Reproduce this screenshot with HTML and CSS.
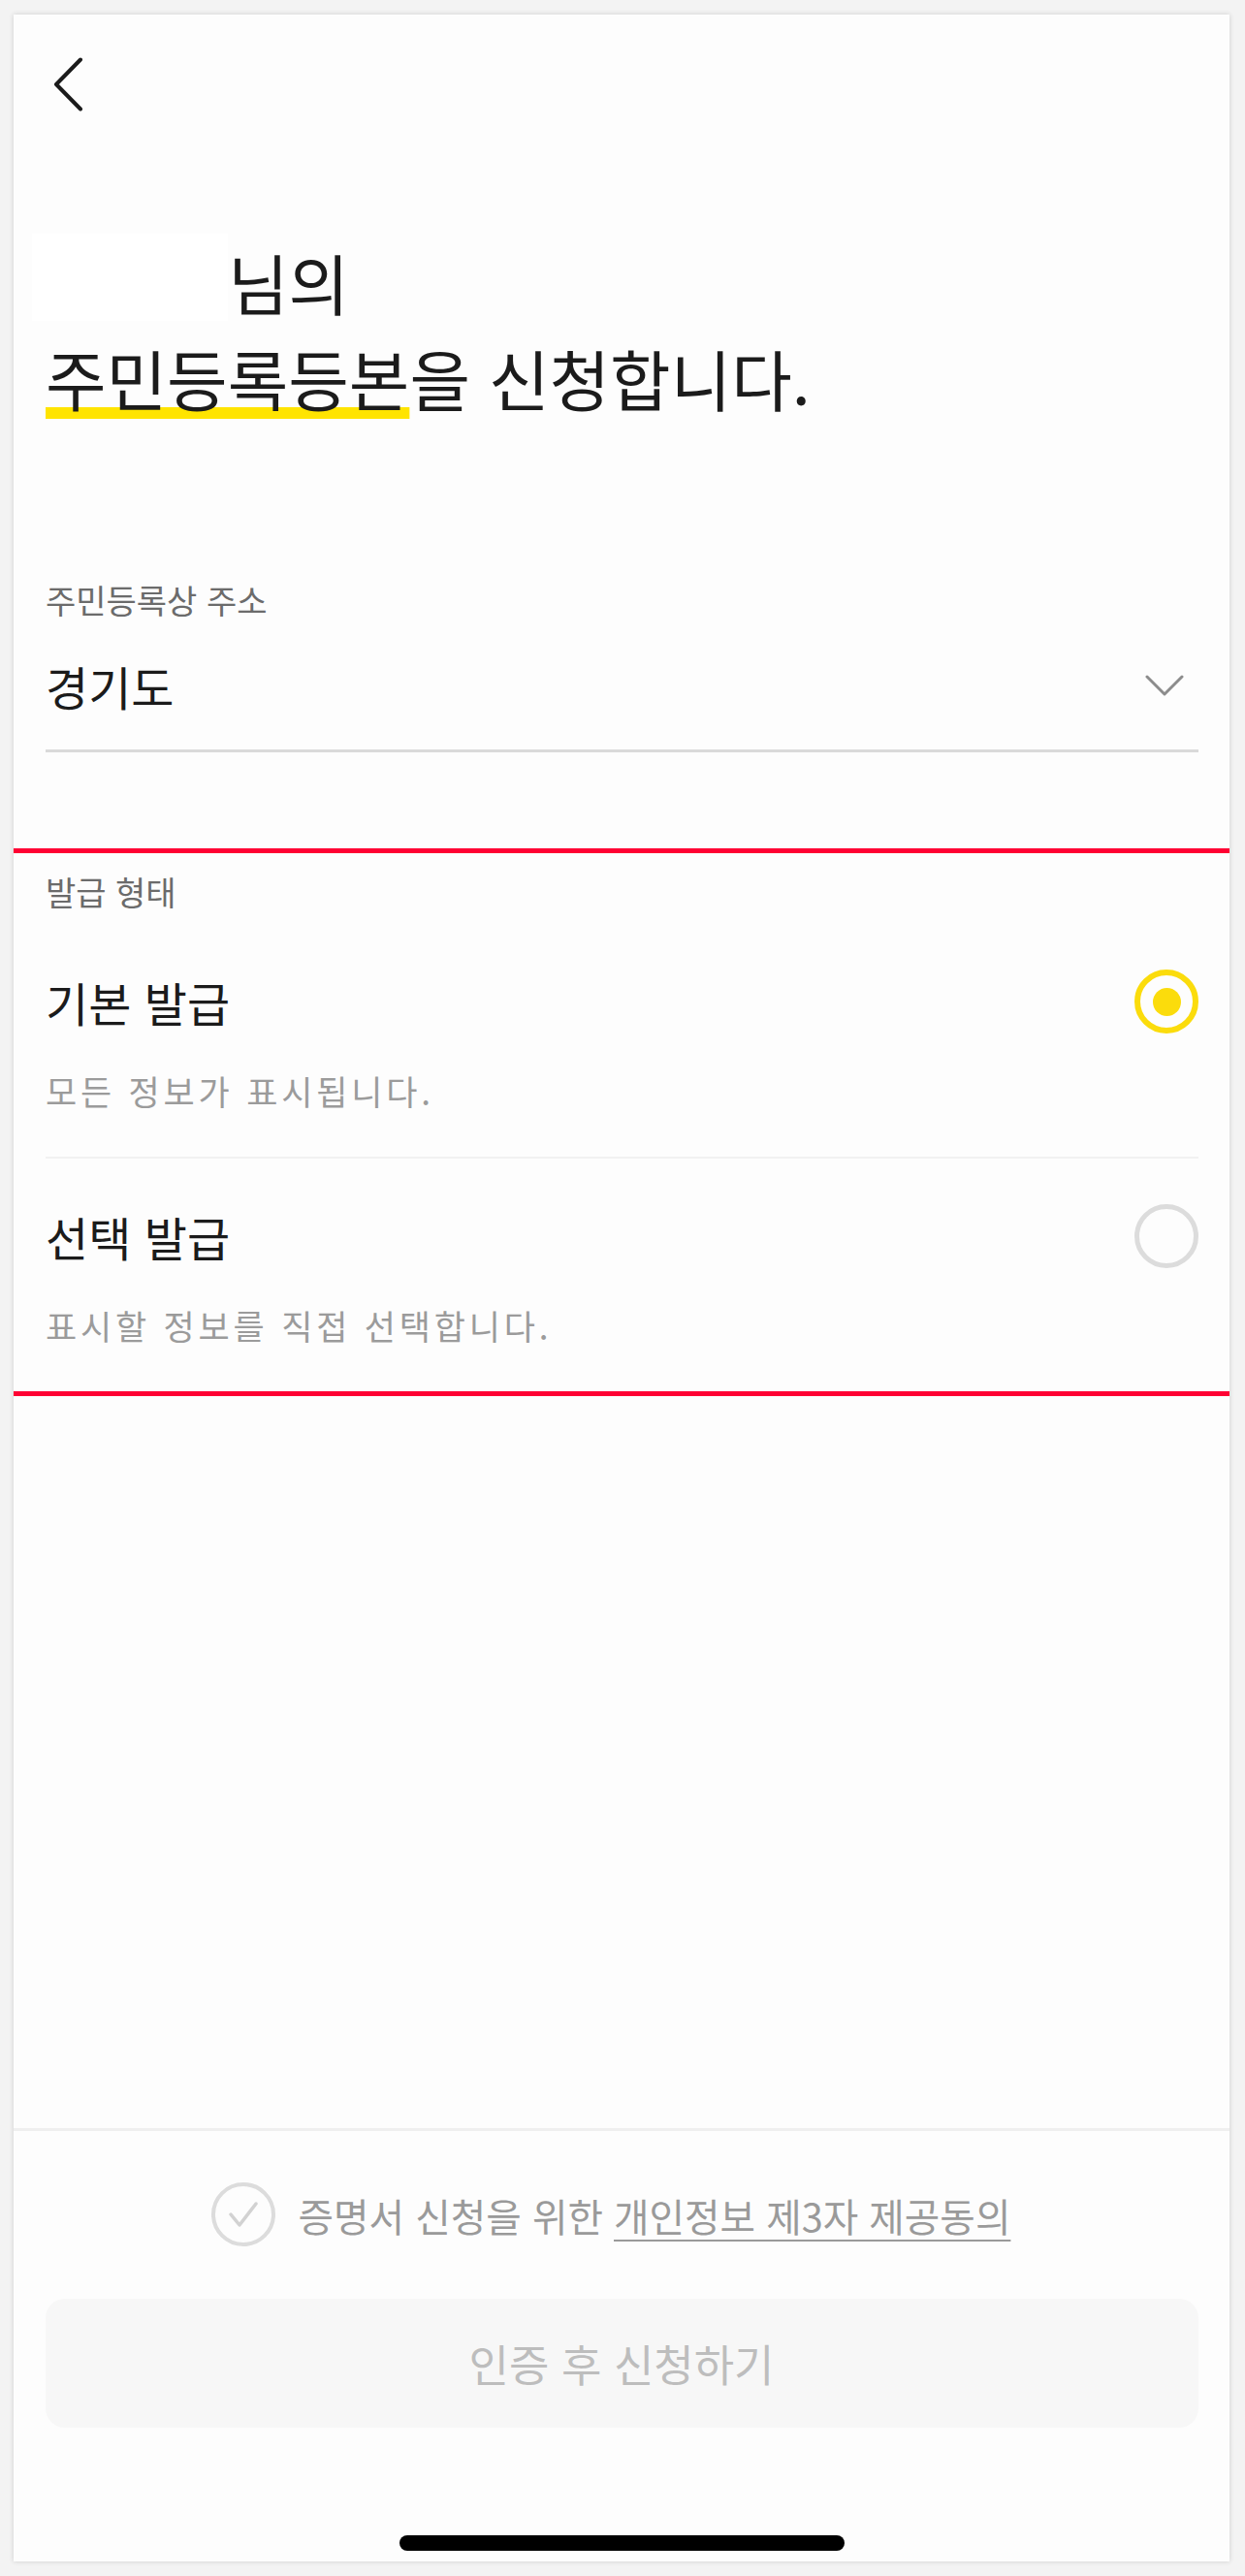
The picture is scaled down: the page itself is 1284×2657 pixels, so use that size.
FILE: index.html
```html
<!DOCTYPE html>
<html lang="ko">
<head>
<meta charset="utf-8">
<title>주민등록등본 신청</title>
<link rel="stylesheet" href="styles.css">
</head>
<body>
<div class="phone">
  <header class="topbar">
    <svg class="back" width="32" height="56" viewBox="0 0 32 56" aria-label="뒤로">
      <path d="M28 2.5 L3 28 L28 53.5" fill="none" stroke="#1b1b1b" stroke-width="4" stroke-linecap="round" stroke-linejoin="round"/>
    </svg>
  </header>

  <h1 class="title">
    <span class="line"><span class="name-mask"></span>님의</span>
    <span class="line"><span class="hl">주민등록등본</span>을 신청합니다.</span>
  </h1>

  <section class="field">
    <div class="label">주민등록상 주소</div>
    <div class="select">
      <span class="value">경기도</span>
      <svg class="chev" width="40" height="24" viewBox="0 0 40 24">
        <path d="M2 3 L20 21 L38 3" fill="none" stroke="#8c8c8c" stroke-width="3" stroke-linecap="round" stroke-linejoin="round"/>
      </svg>
    </div>
  </section>

  <section class="issue">
    <div class="label label-issue">발급 형태</div>
    <div class="option option-first">
      <div class="option-row">
        <span class="option-title">기본 발급</span>
        <span class="radio radio-on"></span>
      </div>
      <div class="option-desc">모든 정보가 표시됩니다.</div>
    </div>
    <div class="option">
      <div class="option-row">
        <span class="option-title">선택 발급</span>
        <span class="radio"></span>
      </div>
      <div class="option-desc">표시할 정보를 직접 선택합니다.</div>
    </div>
  </section>

  <div class="spacer"></div>

  <footer class="footer">
    <div class="consent">
      <svg class="check" width="66" height="66" viewBox="0 0 66 66">
        <circle cx="33" cy="33" r="31" fill="none" stroke="#dcdcdc" stroke-width="4"/>
        <path d="M20 33 L29 44 L46 22" fill="none" stroke="#d2d2d2" stroke-width="3.5" stroke-linecap="round" stroke-linejoin="round"/>
      </svg>
      <span class="consent-text">증명서 신청을 위한 <span class="consent-link">개인정보 제3자 제공동의</span></span>
    </div>
    <button class="submit" type="button">인증 후 신청하기</button>
    <div class="home-indicator"></div>
  </footer>
</div>
</body>
</html>
```

FILE: styles.css
```css
html, body {
  margin: 0;
  padding: 0;
}

body {
  background: #f3f3f3;
  font-family: "Noto Sans CJK KR", "Noto Sans", sans-serif;
  width: 1284px;
  height: 2657px;
  overflow: hidden;
}

.phone {
  width: 1254px;
  height: 2627px;
  margin: 15px 0 0 14px;
  background: #fdfdfd;
  box-shadow: 0 0 5px rgba(0, 0, 0, 0.16);
  display: flex;
  flex-direction: column;
}

.topbar {
  height: 140px;
  padding: 44px 0 0 41px;
  box-sizing: border-box;
}

.back {
  display: block;
}

.title {
  margin: 86px 0 0;
  padding: 0 32px 0 33px;
  font-size: 68px;
  font-weight: 400;
  line-height: 99px;
  color: #1b1b1b;
}

.line {
  display: block;
}

.name-mask {
  display: inline-block;
  vertical-align: top;
  width: 202px;
  height: 90px;
  margin-left: -14px;
  background: #ffffff;
}

.hl {
  text-decoration: underline;
  text-decoration-color: #ffe400;
  text-decoration-thickness: 12px;
  text-underline-offset: 1px;
  text-decoration-skip-ink: none;
}

.field {
  margin-top: 158px;
  padding: 0 32px 0 33px;
}

.label {
  font-size: 34px;
  line-height: 44px;
  color: #6b6b6b;
}

.select {
  margin-top: 33px;
  height: 66px;
  padding-bottom: 33px;
  border-bottom: 3px solid #dadada;
  display: flex;
  align-items: center;
  justify-content: space-between;
}

.value {
  font-size: 48px;
  line-height: 66px;
  color: #1b1b1b;
}

.chev {
  display: block;
  margin-right: 15px;
}

.issue {
  margin-top: 99px;
  padding: 18px 32px 0 33px;
  border-top: 5px solid #ff0033;
  border-bottom: 5px solid #ff0033;
}

.label-issue {
  margin-bottom: 11px;
}

.option {
  padding: 47px 0 46px;
}

.option-first {
  border-bottom: 2px solid #f1f1f1;
}

.option-row {
  height: 66px;
  display: flex;
  align-items: center;
  justify-content: space-between;
}

.option-title {
  font-size: 48px;
  line-height: 66px;
  color: #1b1b1b;
}

.option-desc {
  margin-top: 37px;
  font-size: 35px;
  line-height: 44px;
  letter-spacing: 3.8px;
  color: #9b9b9b;
}

.radio {
  width: 66px;
  height: 66px;
  box-sizing: border-box;
  border-radius: 50%;
  border: 5px solid #dcdcdc;
  display: flex;
  align-items: center;
  justify-content: center;
}

.radio-on {
  border: 6px solid #fbdc0c;
}

.radio-on::after {
  content: "";
  width: 29px;
  height: 29px;
  border-radius: 50%;
  background: #fbdc0c;
}

.spacer {
  flex: 1;
}

.footer {
  border-top: 3px solid #efefef;
  padding: 53px 0 11px;
  display: flex;
  flex-direction: column;
  align-items: center;
}

.consent {
  height: 66px;
  margin-right: 22px;
  display: flex;
  align-items: center;
  gap: 24px;
  font-size: 39.7px;
  color: #9a9a9a;
}

.check {
  display: block;
}

.consent-link {
  text-decoration: underline;
  text-decoration-thickness: 2px;
  text-underline-offset: 8px;
}

.submit {
  margin-top: 54px;
  width: 1189px;
  height: 133px;
  border: 0;
  border-radius: 20px;
  background: #f7f7f7;
  color: #bdbdbd;
  font-family: inherit;
  font-size: 45px;
  padding: 0;
}

.home-indicator {
  margin-top: 111px;
  width: 459px;
  height: 16px;
  border-radius: 8px;
  background: #000000;
}
```
